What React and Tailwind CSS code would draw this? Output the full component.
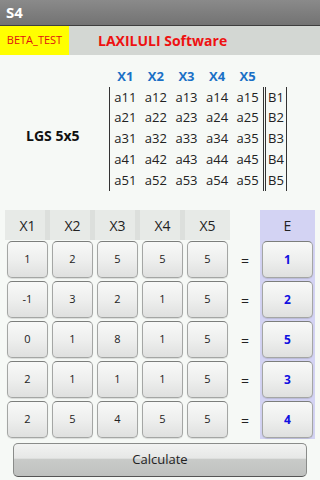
import React from "react";

const rows = [
  { a: [1, 2, 5, 5, 5], e: 1 },
  { a: [-1, 3, 2, 1, 5], e: 2 },
  { a: [0, 1, 8, 1, 5], e: 5 },
  { a: [2, 1, 1, 1, 5], e: 3 },
  { a: [2, 5, 4, 5, 5], e: 4 },
];

const vars = ["X1", "X2", "X3", "X4", "X5"];

// old-style android push button
function Key({ children, blue }) {
  return (
    <div
      className={`h-[37px] rounded-[5px] border border-[#a4a6a4] border-t-[#7c7e7c] bg-gradient-to-b from-[#f8f9f8] via-[#eeefee] to-[#dfe0df] shadow-[0_1px_1px_rgba(0,0,0,0.12)] flex items-center justify-center ${
        blue ? "text-[#1010e0] font-bold text-[12px]" : "text-[#222] text-[11px]"
      }`}
    >
      {children}
    </div>
  );
}

export default function App() {
  return (
    <div
      className="w-[320px] h-[480px] bg-[#f6f9f6] overflow-hidden flex flex-col"
      style={{ fontFamily: '"Open Sans", "Noto Sans", sans-serif' }}
    >
      {/* Title bar */}
      <div className="h-[25px] bg-gradient-to-b from-[#8a8a8a] to-[#737373] flex items-center px-[6px]">
        <span className="text-white font-bold text-[15px] leading-none">S4</span>
      </div>
      <div className="h-[1px] bg-[#3e3e3e]" />

      {/* Banner */}
      <div className="h-[29px] bg-[#d3d7d3] flex items-center">
        <div className="w-[69px] h-full bg-[#ffff00] flex items-center justify-center text-[11px] text-[#e01010]">
          BETA_TEST
        </div>
        <div className="ml-[29px] text-[14px] font-bold text-[#ee1111]">LAXILULI Software</div>
      </div>

      {/* Matrix scheme */}
      <div className="flex pt-[12px] h-[155px]">
        <div className="w-[109px] pl-[26px] pt-[58px] text-[14px] font-bold text-[#111]">LGS 5x5</div>
        <div className="text-[13px] text-[#222]">
          <div className="flex h-[20px] items-center pl-[1px] font-bold text-[#1a70c6]">
            {vars.map((v) => (
              <div key={v} className="w-[30.6px] text-center">
                {v}
              </div>
            ))}
          </div>
          <div className="flex border-l border-[#333]">
            <div className="border-r-[3px] border-double border-[#333]">
              {[1, 2, 3, 4, 5].map((r) => (
                <div key={r} className="flex h-[20.8px] items-center">
                  {[1, 2, 3, 4, 5].map((c) => (
                    <div key={c} className="w-[30.6px] text-center">
                      a{r}
                      {c}
                    </div>
                  ))}
                </div>
              ))}
            </div>
            <div className="w-[21px] border-r border-[#333] pl-[2px]">
              {[1, 2, 3, 4, 5].map((r) => (
                <div key={r} className="h-[20.8px] flex items-center">
                  B{r}
                </div>
              ))}
            </div>
          </div>
        </div>
      </div>

      {/* Input grid */}
      <div className="flex px-[5px]">
        <div className="w-[225px]">
          <div className="flex h-[30px]">
            {vars.map((v, i) => (
              <div
                key={v}
                className={`w-[45px] bg-[#e7eae7] flex items-center justify-center text-[14px] text-[#222] ${
                  i < 4 ? "border-r-[5px] border-[#dcdfdc] pl-[5px]" : ""
                }`}
              >
                {v}
              </div>
            ))}
          </div>
          {rows.map((row, r) => (
            <div key={r} className="flex h-[40px] pt-[1px]">
              {row.a.map((n, c) => (
                <div key={c} className="w-[45px] pl-[2px] pr-[2px]">
                  <Key>{n}</Key>
                </div>
              ))}
            </div>
          ))}
        </div>
        <div className="w-[30px] pt-[30px]">
          {rows.map((_, r) => (
            <div key={r} className="h-[40px] flex items-center justify-center text-[14px] text-[#222]">
              =
            </div>
          ))}
        </div>
        <div className="w-[55px] bg-[#d3d3f3] h-[229px]">
          <div className="h-[30px] flex items-center justify-center text-[14px] text-[#222]">E</div>
          {rows.map((row, r) => (
            <div key={r} className="h-[40px] pt-[1px] px-[2px]">
              <Key blue>{row.e}</Key>
            </div>
          ))}
        </div>
      </div>

      {/* Calculate */}
      <div className="px-[13px] pt-[3px]">
        <div className="h-[34px] rounded-[5px] border border-[#8a8c8a] border-b-[#555] bg-[linear-gradient(to_bottom,#f2f3f2_0%,#e6e7e6_45%,#c9cbc9_46%,#bfc1bf_100%)] flex items-center justify-center text-[13px] text-[#222]">
          Calculate
        </div>
      </div>
    </div>
  );
}
